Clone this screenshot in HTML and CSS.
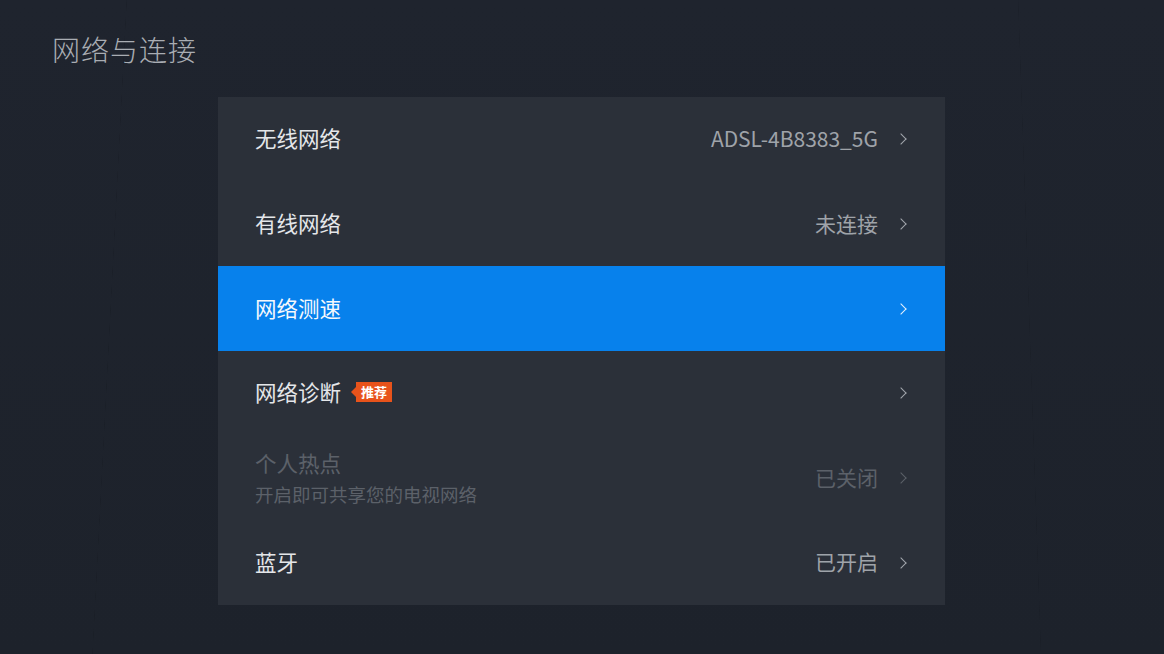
FILE: index.html
```html
<!DOCTYPE html>
<html>
	<head>
		<title>网络与连接</title>
		<meta charset="UTF-8">
		<meta name="viewport" content="width=device-width, initial-scale=1.0">
		<link rel="stylesheet" href="styles.css">
	</head>
	<body>
		<div class="screen">
			<header>
				<h1>网络与连接</h1>
			</header>
			<section class="panel">
				<div class="item">
					<div class="item-title">无线网络</div>
					<div class="item-value">ADSL-4B8383_5G</div>
					<span class="chevron"></span>
				</div>
				<div class="item">
					<div class="item-title">有线网络</div>
					<div class="item-value">未连接</div>
					<span class="chevron"></span>
				</div>
				<div class="item active">
					<div class="item-title">网络测速</div>
					<div class="item-value"></div>
					<span class="chevron"></span>
				</div>
				<div class="item">
					<div class="item-title">网络诊断 <span class="badge">推荐</span></div>
					<div class="item-value"></div>
					<span class="chevron"></span>
				</div>
				<div class="item disabled">
					<div class="item-title">
						个人热点
						<small>开启即可共享您的电视网络</small>
					</div>
					<div class="item-value">已关闭</div>
					<span class="chevron"></span>
				</div>
				<div class="item">
					<div class="item-title">蓝牙</div>
					<div class="item-value">已开启</div>
					<span class="chevron"></span>
				</div>
			</section>
		</div>
	</body>
</html>
```
FILE: styles.css
```css
html, body {
	margin: 0;
	height: 100%;
}
body {
	background: #1e232d;
	font-family: "Noto Sans CJK SC", "Noto Sans", sans-serif;
	overflow: hidden;
}
.screen {
	width: 1164px;
	height: 654px;
	box-sizing: border-box;
	padding: 29px 0 0 52px;
	background:
		linear-gradient(93deg, transparent 49.7%, rgba(14,17,23,.22) 49.85%, transparent 50%) 0 0 / 220px 654px no-repeat,
		linear-gradient(88deg, transparent 49.7%, rgba(14,17,23,.18) 49.85%, transparent 50%) 900px 0 / 260px 654px no-repeat,
		linear-gradient(180deg, #1f242e, #1d222b);
}
header h1 {
	margin: 0;
	font-size: 28px;
	font-weight: 300;
	color: #a9adb3;
	letter-spacing: 1px;
	line-height: 40px;
}
.panel {
	margin: 28px 0 0 166px;
	width: 727px;
	background: #2b3039;
	display: flex;
	flex-direction: column;
}
.item {
	display: flex;
	align-items: center;
	height: 84.7px;
	padding: 0 37px 3px;
	box-sizing: border-box;
}
.item-title {
	flex: 1;
	display: flex;
	align-items: center;
	flex-wrap: wrap;
	font-size: 21.5px;
	color: #e4e6e9;
}
.item-title small {
	display: block;
	width: 100%;
	font-size: 18.5px;
	margin-top: 3px;
}
.item-value {
	font-size: 21px;
	color: #9fa3a9;
	margin-right: 19px;
}
.chevron {
	width: 7px;
	height: 7px;
	border-top: 1.8px solid #a3a7ad;
	border-right: 1.8px solid #a3a7ad;
	transform: rotate(45deg);
	margin: 3px 3px 0 0;
}
.item.active {
	background: #0781ec;
}
.item.active .item-title {
	color: #f4f8fc;
}
.item.active .chevron {
	border-color: #e6f1fc;
}
.item.disabled .item-title,
.item.disabled .item-value {
	color: #5c6169;
}
.item.disabled .chevron {
	border-color: #5c6169;
}
.badge {
	position: relative;
	margin-left: 15px;
	background: #e8531b;
	color: #fff;
	font-size: 13px;
	font-weight: bold;
	line-height: 20px;
	padding: 0 5px;
}
.badge::before {
	content: "";
	position: absolute;
	left: -5px;
	top: 50%;
	transform: translateY(-50%);
	border: 5px solid transparent;
	border-left: 0;
	border-right-color: #e8531b;
}
```
